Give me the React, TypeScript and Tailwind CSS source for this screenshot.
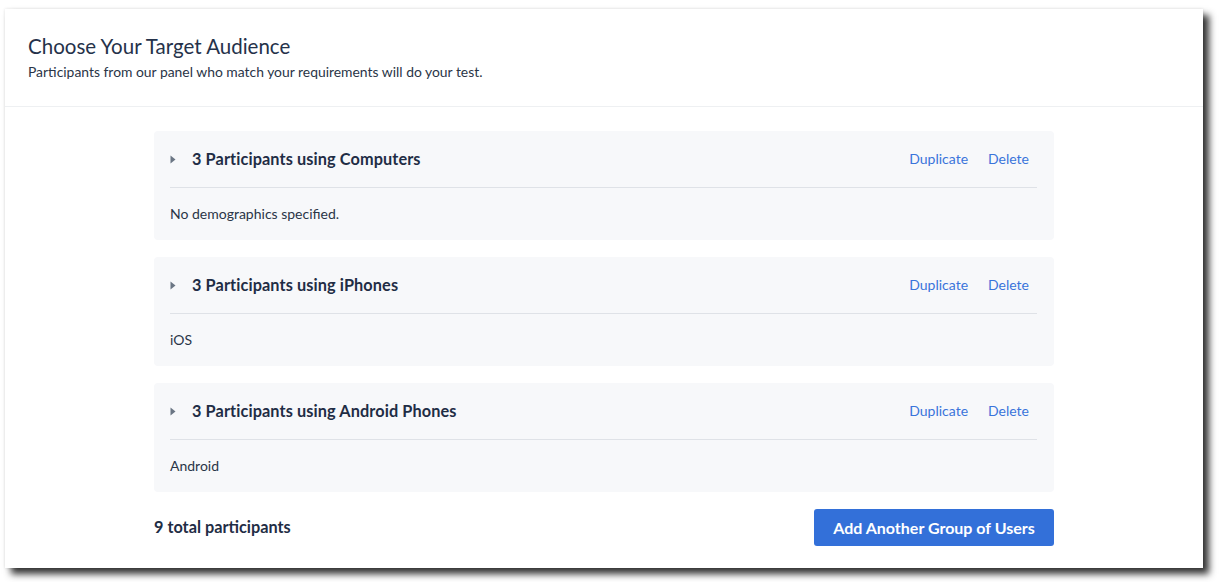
const groups = [
  {title: '3 Participants using Computers', detail: 'No demographics specified.'},
  {title: '3 Participants using iPhones', detail: 'iOS'},
  {title: '3 Participants using Android Phones', detail: 'Android'},
];

function Caret() {
  return (
    <svg width="6" height="9" viewBox="0 0 6 9" className="shrink-0">
      <path d="M0.5 0.5 L5.5 4.5 L0.5 8.5 Z" fill="#6b7684" />
    </svg>
  );
}

function GroupCard({title, detail}: {title: string; detail: string}) {
  return (
    <div className="rounded-[4px] bg-[#f7f8fa] px-4 pr-[17px]">
      <div className="flex h-[57px] items-center border-b border-[#dfe2e7]">
        <Caret />
        <div className="ml-4 flex-1 text-[16.3px] font-bold tracking-[0.1px] text-[#1f2d45]">{title}</div>
        <div className="mb-[2px] flex gap-5 pr-2 text-[14px] text-[#3a74db]">
          <button>Duplicate</button>
          <button>Delete</button>
        </div>
      </div>
      <div className="flex h-[52px] items-center pb-[2px] text-[14px] text-[#2a3547]">{detail}</div>
    </div>
  );
}

export default function App() {
  return (
    <div className="h-[582px] w-[1219px] bg-white pl-[5px] pt-[9px]" style={{fontFamily: 'Lato, "Noto Sans", sans-serif'}}>
      <div className="flex h-[559px] w-[1198px] flex-col bg-white shadow-[6px_6px_7px_rgba(0,0,0,0.8),0_0_3px_rgba(0,0,0,0.12)]">
        <div className="border-b border-[#eef0f2] px-[23px] pb-[25px] pt-[25px]">
          <h1 className="text-[20.5px] leading-6 text-[#25324a]">Choose Your Target Audience</h1>
          <p className="mt-[5px] text-[13.9px] leading-[18px] text-[#2a3547]">
            Participants from our panel who match your requirements will do your test.
          </p>
        </div>
        <div className="mx-auto mt-6 flex w-[900px] flex-col">
          <div className="flex flex-col gap-[17px]">
            {groups.map(g => (
              <GroupCard key={g.title} {...g} />
            ))}
          </div>
          <div className="mt-[17px] flex items-center justify-between">
            <div className="text-[16.3px] font-bold text-[#1f2d45]">9 total participants</div>
            <button className="h-[37px] w-[240px] rounded-[3px] bg-[#3370d9] text-[16px] font-bold text-white">
              Add Another Group of Users
            </button>
          </div>
        </div>
      </div>
    </div>
  );
}
